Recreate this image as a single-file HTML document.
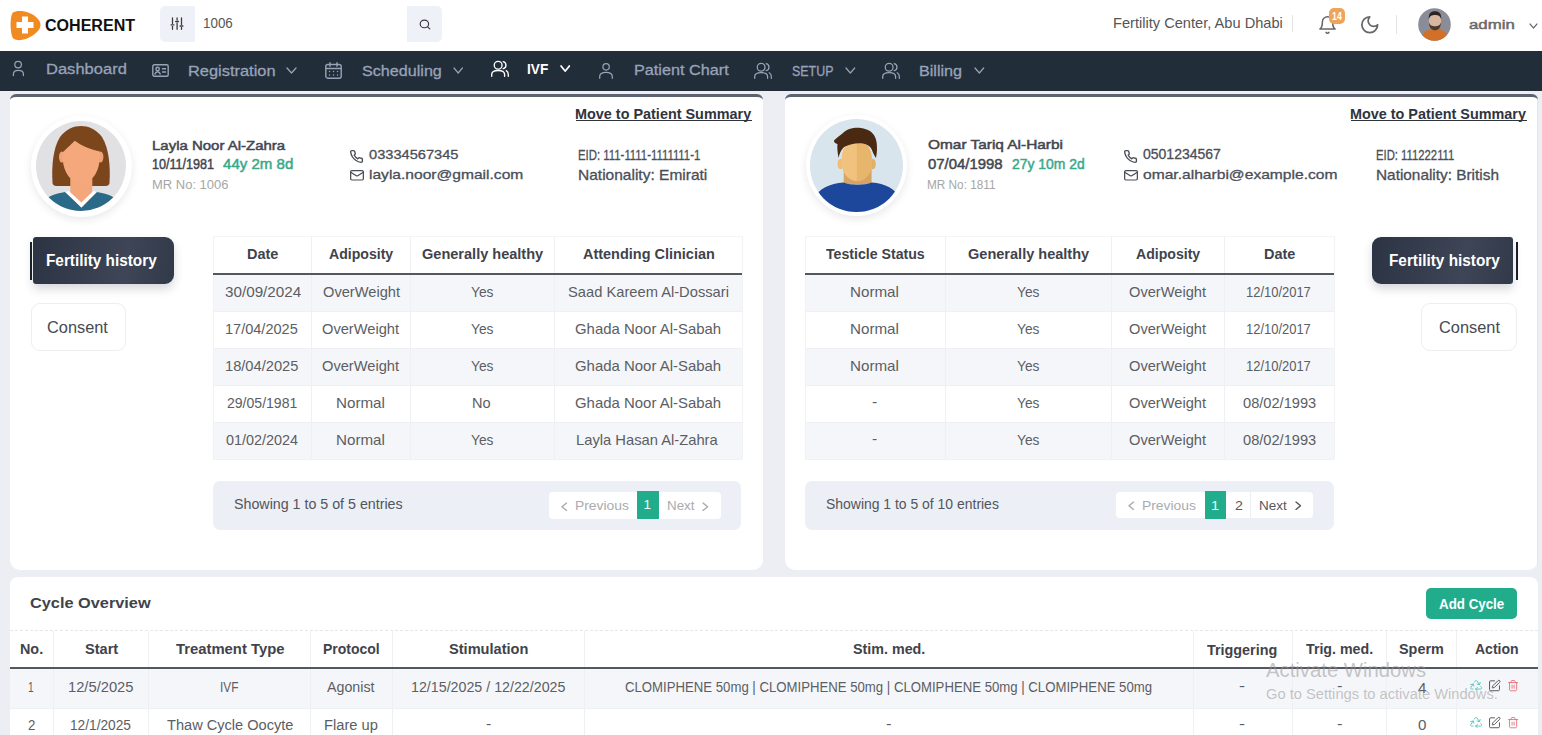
<!DOCTYPE html>
<html><head><meta charset="utf-8">
<style>
*{margin:0;padding:0;box-sizing:border-box}
html,body{width:1542px;height:735px;overflow:hidden;background:#eceef4;font-family:"Liberation Sans",sans-serif}
.a{position:absolute}
.t{position:absolute;white-space:nowrap;transform-origin:0 0}
svg{position:absolute;overflow:visible}
</style></head><body>
<div class="a" style="left:0.00px;top:0.00px;width:1542.00px;height:51.00px;background:#fff"></div>
<svg style="left:9px;top:10px;width:33px;height:31px" viewBox="0 0 33 31"><path d="M4 2.5 C8 -0.5 22 0.5 29 9 C33 13.5 32 18 28 22 C21 29 10 32 5 29 C1 26.5 0.5 6 4 2.5Z" fill="#f18b1f"/><path d="M13 6.5h6v5.5h5.5v6H19v5.5h-6V18H7.5v-6H13Z" fill="#fff"/></svg>
<div class="a" style="left:160.00px;top:6.00px;width:35.00px;height:36.00px;background:#eef1f7;border-radius:5px 0 0 5px"></div>
<div class="a" style="left:407.00px;top:6.00px;width:35.00px;height:36.00px;background:#eef1f7;border-radius:0 5px 5px 0"></div>
<svg style="left:170.00px;top:17.00px;width:14.00px;height:13.50px" viewBox="0 0 14 13.5" preserveAspectRatio="none" fill="none" stroke="#3c3c3c" stroke-width="1.3" stroke-linecap="round" stroke-linejoin="round" ><path d="M2.5 1v5.4M2.5 9.3v3M7.1 1v2M7.1 6v6.3M11.5 1v6.4M11.5 10.4v1.9"/><path d="M1.1 7.9h2.8M5.7 4.5h2.8M10.1 9h2.8"/></svg>
<svg style="left:418.50px;top:19.00px;width:12.00px;height:11.00px" viewBox="2 2 20 20" preserveAspectRatio="none" fill="none" stroke="#3c3c3c" stroke-width="2.0" stroke-linecap="round" stroke-linejoin="round" ><circle cx="11" cy="11" r="7"/><path d="m20 20-4-4"/></svg>
<div class="a" style="left:1292.00px;top:15.00px;width:1.00px;height:17.00px;background:#e3e3e3"></div>
<svg style="left:1319.00px;top:15.50px;width:17.00px;height:18.00px" viewBox="2 1 20 22" preserveAspectRatio="none" fill="none" stroke="#666" stroke-width="1.8" stroke-linecap="round" stroke-linejoin="round" ><path d="M6 8a6 6 0 0 1 12 0c0 7 3 9 3 9H3s3-2 3-9"/><path d="M10.3 21a1.94 1.94 0 0 0 3.4 0"/></svg>
<div class="a" style="left:1328.70px;top:7.80px;width:16.00px;height:15.90px;background:#efa45a;border-radius:5px"></div>
<svg style="left:1361.00px;top:16.00px;width:17.50px;height:17.50px" viewBox="2 2 20 20" preserveAspectRatio="none" fill="none" stroke="#666" stroke-width="2" stroke-linecap="round" stroke-linejoin="round" ><path d="M12 3a6 6 0 0 0 9 9 9 9 0 1 1-9-9Z"/></svg>
<div class="a" style="left:1396.00px;top:15.00px;width:1.00px;height:18.50px;background:#e3e3e3"></div>
<svg style="left:1418px;top:7.5px;width:33px;height:33px" viewBox="0 0 33 33"><defs><clipPath id="av"><circle cx="16.5" cy="16.5" r="16.3"/></clipPath></defs><g clip-path="url(#av)"><rect width="33" height="33" fill="#8a8d98"/><rect x="13.5" y="17" width="7" height="5" fill="#c99c80"/><path d="M2 34 C3 26 8 21 17 20.3 C26 21 30 26 31 34Z" fill="#d2702a"/><ellipse cx="17" cy="13.2" rx="6.2" ry="8" fill="#d8b7a0"/><path d="M10.8 11.5 C10.4 5 13 3.2 17 3.2 C21 3.2 23.6 5 23.2 11.5 C22.5 7.6 20 6.9 17 6.9 C14 6.9 11.5 7.6 10.8 11.5Z" fill="#2e2521"/><path d="M10.9 14 C11 20 14 22.3 17 22.3 C20 22.3 23 20 23.1 14 C22 17.5 20 18.3 17 18.3 C14 18.3 12 17.5 10.9 14Z" fill="#4b3a2f"/></g></svg>
<svg style="left:1529.50px;top:23.80px;width:7.00px;height:4.00px" viewBox="6 9 12 6" preserveAspectRatio="none" fill="none" stroke="#666" stroke-width="1.8" stroke-linecap="round" stroke-linejoin="round" ><path d="m6 9 6 6 6-6"/></svg>
<div class="a" style="left:0.00px;top:51.00px;width:1542.00px;height:40.00px;background:#222d3a"></div>
<svg style="left:12.00px;top:60.00px;width:13.00px;height:17.00px" viewBox="0 0 13 17" preserveAspectRatio="none" fill="none" stroke="#98a3b8" stroke-width="1.25" stroke-linecap="round" stroke-linejoin="round" ><circle cx="6.1" cy="4.6" r="3.3"/><path d="M1.4,15.6 L1.4,14 C1.4,11.4 3.5,10.4 6.4,10.4 C9.3,10.4 11.4,11.4 11.4,14 L11.4,15.6"/></svg>
<svg style="left:152.00px;top:64.00px;width:17.00px;height:13.00px" viewBox="0 0 17 13" preserveAspectRatio="none" fill="none" stroke="#98a3b8" stroke-width="1.4" stroke-linecap="round" stroke-linejoin="round" ><rect x="0.8" y="0.8" width="15.4" height="11.4" rx="1.5"/><circle cx="5.6" cy="5" r="1.7"/><path d="M3 10c0.5-1.6 1.5-2.2 2.6-2.2S7.7 8.4 8.2 10"/><path d="M10.5 4.8h3M10.5 8h3"/></svg>
<svg style="left:287.00px;top:68.00px;width:9.00px;height:5.00px" viewBox="6 9 12 6" preserveAspectRatio="none" fill="none" stroke="#98a3b8" stroke-width="1.8" stroke-linecap="round" stroke-linejoin="round" ><path d="m6 9 6 6 6-6"/></svg>
<svg style="left:325.00px;top:62.00px;width:17.00px;height:17.00px" viewBox="0 0 17 17" preserveAspectRatio="none" fill="none" stroke="#98a3b8" stroke-width="1.4" stroke-linecap="round" stroke-linejoin="round" ><rect x="0.8" y="2.5" width="15.4" height="13.7" rx="2"/><path d="M5 0.8v3.4M12 0.8v3.4M0.8 6.5h15.4"/><path d="M4.5 9.5h0.1M8.5 9.5h0.1M12.5 9.5h0.1M4.5 13h0.1M8.5 13h0.1M12.5 13h0.1"/></svg>
<svg style="left:453.60px;top:68.00px;width:8.40px;height:5.00px" viewBox="6 9 12 6" preserveAspectRatio="none" fill="none" stroke="#98a3b8" stroke-width="1.8" stroke-linecap="round" stroke-linejoin="round" ><path d="m6 9 6 6 6-6"/></svg>
<svg style="left:491.00px;top:61.30px;width:18.00px;height:16.00px" viewBox="0 0 18 16" preserveAspectRatio="none" fill="none" stroke="#fff" stroke-width="1.35" stroke-linecap="round" stroke-linejoin="round" ><circle cx="7.15" cy="4.2" r="3.9"/><path d="M0.7,15.3 V13.5 C0.7,10.8 3.5,9.5 7.15,9.5 C10.8,9.5 13.6,10.8 13.6,13.5 V15.3"/><path d="M12.2,0.7 A3.6,3.6 0 0 1 12.2,7.7"/><path d="M15.2,9.7 C16.7,10.4 17.3,11.8 17.3,13.5 V15.3"/></svg>
<svg style="left:560.60px;top:66.30px;width:8.40px;height:5.10px" viewBox="6 9 12 6" preserveAspectRatio="none" fill="none" stroke="#fff" stroke-width="2.1" stroke-linecap="round" stroke-linejoin="round" ><path d="m6 9 6 6 6-6"/></svg>
<svg style="left:598.90px;top:63.00px;width:14.00px;height:16.00px" viewBox="0 0 14 16" preserveAspectRatio="none" fill="none" stroke="#98a3b8" stroke-width="1.25" stroke-linecap="round" stroke-linejoin="round" ><circle cx="7.1" cy="3.8" r="3.2"/><path d="M0.7,15.3 L0.7,13.6 C0.7,10.6 3.5,9.3 7,9.3 C10.5,9.3 13.3,10.6 13.3,13.6 L13.3,15.3"/></svg>
<svg style="left:754.00px;top:63.00px;width:18.00px;height:16.00px" viewBox="0 0 18 16" preserveAspectRatio="none" fill="none" stroke="#98a3b8" stroke-width="1.25" stroke-linecap="round" stroke-linejoin="round" ><circle cx="7.15" cy="4.2" r="3.9"/><path d="M0.7,15.3 V13.5 C0.7,10.8 3.5,9.5 7.15,9.5 C10.8,9.5 13.6,10.8 13.6,13.5 V15.3"/><path d="M12.2,0.7 A3.6,3.6 0 0 1 12.2,7.7"/><path d="M15.2,9.7 C16.7,10.4 17.3,11.8 17.3,13.5 V15.3"/></svg>
<svg style="left:846.00px;top:68.40px;width:8.70px;height:5.00px" viewBox="6 9 12 6" preserveAspectRatio="none" fill="none" stroke="#98a3b8" stroke-width="1.8" stroke-linecap="round" stroke-linejoin="round" ><path d="m6 9 6 6 6-6"/></svg>
<svg style="left:881.70px;top:63.00px;width:18.00px;height:16.00px" viewBox="0 0 18 16" preserveAspectRatio="none" fill="none" stroke="#98a3b8" stroke-width="1.25" stroke-linecap="round" stroke-linejoin="round" ><circle cx="7.15" cy="4.2" r="3.9"/><path d="M0.7,15.3 V13.5 C0.7,10.8 3.5,9.5 7.15,9.5 C10.8,9.5 13.6,10.8 13.6,13.5 V15.3"/><path d="M12.2,0.7 A3.6,3.6 0 0 1 12.2,7.7"/><path d="M15.2,9.7 C16.7,10.4 17.3,11.8 17.3,13.5 V15.3"/></svg>
<svg style="left:975.00px;top:68.40px;width:8.70px;height:5.00px" viewBox="6 9 12 6" preserveAspectRatio="none" fill="none" stroke="#98a3b8" stroke-width="1.8" stroke-linecap="round" stroke-linejoin="round" ><path d="m6 9 6 6 6-6"/></svg>
<div class="a" style="left:10.00px;top:94.00px;width:752.60px;height:476.00px;background:#fff;border-radius:6px 6px 10px 10px;border-top:3px solid #5d6271;"></div>
<div class="a" style="left:785.00px;top:94.00px;width:752.80px;height:476.00px;background:#fff;border-radius:6px 6px 10px 10px;border-top:3px solid #5d6271;"></div>
<div class="a" style="left:1536.50px;top:100.00px;width:1.50px;height:465.00px;background:#e4e6ec"></div>
<div class="a" style="left:30.80px;top:115.50px;width:101px;height:101px;border-radius:50%;background:#fff;box-shadow:0 3px 9px rgba(0,0,0,0.09)"></div>
<svg style="left:36.30px;top:121.00px;width:90px;height:90px" viewBox="0 0 90 90"><defs><clipPath id="cf"><circle cx="45" cy="45" r="45"/></clipPath></defs><g clip-path="url(#cf)"><rect width="90" height="90" fill="#e1e1e3"/><path d="M16.5,62 C15.5,45 17,27 24,16 C30,8 38,5 45,5 C52,5 60,8 66,16 C73,27 74.5,45 73.5,62 C73.3,64.5 71,65 68,65 L22,65 C19,65 16.7,64.5 16.5,62Z" fill="#7b461c"/><rect x="34.3" y="50" width="22" height="32" fill="#f3a77b"/><ellipse cx="25.8" cy="36" rx="2.8" ry="5.5" fill="#f0a276"/><ellipse cx="64.6" cy="36" rx="2.8" ry="5.5" fill="#f0a276"/><path d="M26.5,31.5 L38.8,19.7 C46,25 55,28.5 63.8,30.5 C64.5,46 60,60.5 45.4,62.5 C31,60.5 26,46 26.5,31.5Z" fill="#f4a87c"/><path d="M6,95 L6,82 C10,76 19,72.5 29.2,71 L45.4,86.6 L60.8,71 C71,72.5 80,76 84,82 L84,95Z" fill="#2a6a88"/><path d="M29.2,71 L45.4,86.6 L60.8,71 L57.2,70 L45.4,81.5 L32.8,70Z" fill="#fff"/></g></svg>
<div class="a" style="left:805.50px;top:115.00px;width:101px;height:101px;border-radius:50%;background:#fff;box-shadow:0 3px 9px rgba(0,0,0,0.09)"></div>
<svg style="left:809.50px;top:119.00px;width:93px;height:93px" viewBox="0 0 93 93"><defs><clipPath id="cm"><circle cx="46.5" cy="46.5" r="46.5"/></clipPath></defs><g clip-path="url(#cm)"><rect width="93" height="93" fill="#d8e5ed"/><path d="M33.7,50 L61.6,50 L61.6,64 C55,66 40,66 33.7,64Z" fill="#d8a465"/><path d="M2,100 L4,80 C8,70 20,64.5 33.7,63.6 C40,66.5 55,66.5 61.6,63.6 C75,64.5 86,70 90,80 L92,100Z" fill="#1d479a"/><ellipse cx="30.5" cy="45" rx="3" ry="5.2" fill="#efbd77"/><ellipse cx="62.8" cy="45" rx="3" ry="5.2" fill="#e3b06a"/><path d="M46.9,22 C36,22 31.5,30 31.5,42 C31.5,54 38,62 46.9,62 C56,62 62,54 62,42 C62,30 57,22 46.9,22Z" fill="#f1c27e"/><path d="M46.9,22 C57,22 62,30 62,42 C62,54 56,62 46.9,62Z" fill="#e8b56c"/><path d="M28.5,39 C27.5,33 27,28 27.5,25 C25.5,24.5 23.5,23 24,21.5 C27,18 31,16 33,14 C37,9.5 45,8 51,9 C58,10 63,13 65,18 C67.5,23 67.5,32 66,39 C64.5,37 63,34 61.5,30 C60,27 57,25.5 53,24.5 C47,23.5 40,25 35,27.5 C32,29.5 30,33 28.5,39Z" fill="#4a2913"/></g></svg>
<div class="a" style="left:576.40px;top:119.60px;width:175.80px;height:1.20px;background:#30343c"></div>
<svg style="left:350.30px;top:149.60px;width:13.00px;height:13.00px" viewBox="1 1 22 22" preserveAspectRatio="none" fill="none" stroke="#4a4e58" stroke-width="2.3" stroke-linecap="round" stroke-linejoin="round" ><path d="M22 16.92v3a2 2 0 0 1-2.18 2 19.79 19.79 0 0 1-8.63-3.07 19.5 19.5 0 0 1-6-6 19.79 19.79 0 0 1-3.07-8.67A2 2 0 0 1 4.11 2h3a2 2 0 0 1 2 1.72 12.84 12.84 0 0 0 .7 2.81 2 2 0 0 1-.45 2.11L8.09 9.91a16 16 0 0 0 6 6l1.27-1.27a2 2 0 0 1 2.11-.45 12.84 12.84 0 0 0 2.81.7A2 2 0 0 1 22 16.92z"/></svg>
<svg style="left:350.00px;top:170.00px;width:14.00px;height:10.60px" viewBox="1 3 22 18" preserveAspectRatio="none" fill="none" stroke="#4a4e58" stroke-width="2" stroke-linecap="round" stroke-linejoin="round" ><rect width="20" height="16" x="2" y="4" rx="2"/><path d="m22 7-8.97 5.7a1.94 1.94 0 0 1-2.06 0L2 7"/></svg>
<div class="a" style="left:1351.40px;top:119.60px;width:175.60px;height:1.20px;background:#30343c"></div>
<svg style="left:1124.40px;top:149.60px;width:13.00px;height:13.00px" viewBox="1 1 22 22" preserveAspectRatio="none" fill="none" stroke="#4a4e58" stroke-width="2.3" stroke-linecap="round" stroke-linejoin="round" ><path d="M22 16.92v3a2 2 0 0 1-2.18 2 19.79 19.79 0 0 1-8.63-3.07 19.5 19.5 0 0 1-6-6 19.79 19.79 0 0 1-3.07-8.67A2 2 0 0 1 4.11 2h3a2 2 0 0 1 2 1.72 12.84 12.84 0 0 0 .7 2.81 2 2 0 0 1-.45 2.11L8.09 9.91a16 16 0 0 0 6 6l1.27-1.27a2 2 0 0 1 2.11-.45 12.84 12.84 0 0 0 2.81.7A2 2 0 0 1 22 16.92z"/></svg>
<svg style="left:1124.40px;top:170.00px;width:14.00px;height:10.60px" viewBox="1 3 22 18" preserveAspectRatio="none" fill="none" stroke="#4a4e58" stroke-width="2" stroke-linecap="round" stroke-linejoin="round" ><rect width="20" height="16" x="2" y="4" rx="2"/><path d="m22 7-8.97 5.7a1.94 1.94 0 0 1-2.06 0L2 7"/></svg>
<div class="a" style="left:33.30px;top:236.7px;width:141.00px;height:47.3px;border-radius:3px 9px 9px 3px;background:linear-gradient(100deg,#2c3444,#3d4556 65%,#323a4a);box-shadow:0 5px 10px rgba(30,40,60,0.18)"></div>
<div class="a" style="left:29.70px;top:241.50px;width:2.00px;height:38.00px;background:#1b1f27"></div>
<div class="a" style="left:31.00px;top:303.40px;width:94.80px;height:47.80px;background:#fff;border:1px solid #eceef1;border-radius:9px"></div>
<div class="a" style="left:1372.30px;top:236.7px;width:141.20px;height:47.3px;border-radius:9px 3px 3px 9px;background:linear-gradient(100deg,#2c3444,#3d4556 65%,#323a4a);box-shadow:0 5px 10px rgba(30,40,60,0.18)"></div>
<div class="a" style="left:1515.50px;top:241.50px;width:2.00px;height:38.00px;background:#1b1f27"></div>
<div class="a" style="left:1420.90px;top:303.40px;width:96.50px;height:47.80px;background:#fff;border:1px solid #eceef1;border-radius:9px"></div>
<div class="a" style="left:213.00px;top:236.00px;width:529.00px;height:38.00px;background:#fff"></div>
<div class="a" style="left:213.00px;top:274.00px;width:529.00px;height:37.00px;background:#f5f6f9"></div>
<div class="a" style="left:213.00px;top:311.00px;width:529.00px;height:37.00px;background:#fff"></div>
<div class="a" style="left:213.00px;top:311.00px;width:529.00px;height:1.00px;background:#eef0f3"></div>
<div class="a" style="left:213.00px;top:348.00px;width:529.00px;height:37.00px;background:#f5f6f9"></div>
<div class="a" style="left:213.00px;top:348.00px;width:529.00px;height:1.00px;background:#eef0f3"></div>
<div class="a" style="left:213.00px;top:385.00px;width:529.00px;height:37.00px;background:#fff"></div>
<div class="a" style="left:213.00px;top:385.00px;width:529.00px;height:1.00px;background:#eef0f3"></div>
<div class="a" style="left:213.00px;top:422.00px;width:529.00px;height:37.00px;background:#f5f6f9"></div>
<div class="a" style="left:213.00px;top:422.00px;width:529.00px;height:1.00px;background:#eef0f3"></div>
<div class="a" style="left:213.00px;top:458.50px;width:529.00px;height:1.00px;background:#f0f1f4"></div>
<div class="a" style="left:213.00px;top:236.00px;width:529.00px;height:1.00px;background:#f4f5f7"></div>
<div class="a" style="left:311.20px;top:236.00px;width:1.00px;height:223.00px;background:#eff0f3"></div>
<div class="a" style="left:409.80px;top:236.00px;width:1.00px;height:223.00px;background:#eff0f3"></div>
<div class="a" style="left:553.50px;top:236.00px;width:1.00px;height:223.00px;background:#eff0f3"></div>
<div class="a" style="left:212.50px;top:236.00px;width:1.00px;height:223.00px;background:#f1f2f5"></div>
<div class="a" style="left:741.50px;top:236.00px;width:1.00px;height:223.00px;background:#f1f2f5"></div>
<div class="a" style="left:213.00px;top:272.80px;width:529.00px;height:2.10px;background:#54575e"></div>
<div class="a" style="left:805.00px;top:236.00px;width:529.00px;height:38.00px;background:#fff"></div>
<div class="a" style="left:805.00px;top:274.00px;width:529.00px;height:37.00px;background:#f5f6f9"></div>
<div class="a" style="left:805.00px;top:311.00px;width:529.00px;height:37.00px;background:#fff"></div>
<div class="a" style="left:805.00px;top:311.00px;width:529.00px;height:1.00px;background:#eef0f3"></div>
<div class="a" style="left:805.00px;top:348.00px;width:529.00px;height:37.00px;background:#f5f6f9"></div>
<div class="a" style="left:805.00px;top:348.00px;width:529.00px;height:1.00px;background:#eef0f3"></div>
<div class="a" style="left:805.00px;top:385.00px;width:529.00px;height:37.00px;background:#fff"></div>
<div class="a" style="left:805.00px;top:385.00px;width:529.00px;height:1.00px;background:#eef0f3"></div>
<div class="a" style="left:805.00px;top:422.00px;width:529.00px;height:37.00px;background:#f5f6f9"></div>
<div class="a" style="left:805.00px;top:422.00px;width:529.00px;height:1.00px;background:#eef0f3"></div>
<div class="a" style="left:805.00px;top:458.50px;width:529.00px;height:1.00px;background:#f0f1f4"></div>
<div class="a" style="left:805.00px;top:236.00px;width:529.00px;height:1.00px;background:#f4f5f7"></div>
<div class="a" style="left:944.90px;top:236.00px;width:1.00px;height:223.00px;background:#eff0f3"></div>
<div class="a" style="left:1110.50px;top:236.00px;width:1.00px;height:223.00px;background:#eff0f3"></div>
<div class="a" style="left:1224.20px;top:236.00px;width:1.00px;height:223.00px;background:#eff0f3"></div>
<div class="a" style="left:804.50px;top:236.00px;width:1.00px;height:223.00px;background:#f1f2f5"></div>
<div class="a" style="left:1333.50px;top:236.00px;width:1.00px;height:223.00px;background:#f1f2f5"></div>
<div class="a" style="left:805.00px;top:272.80px;width:529.00px;height:2.10px;background:#54575e"></div>
<div class="a" style="left:213.00px;top:481.00px;width:528.00px;height:48.50px;background:#eceff5;border-radius:7px"></div>
<div class="a" style="left:805.00px;top:481.00px;width:528.50px;height:48.50px;background:#eceff5;border-radius:7px"></div>
<div class="a" style="left:549.30px;top:492.00px;width:171.60px;height:26.80px;background:#fff;border-radius:4px"></div>
<svg style="left:561.50px;top:502.50px;width:4.50px;height:7.50px" viewBox="9 6 6 12" preserveAspectRatio="none" fill="none" stroke="#aaa" stroke-width="1.8" stroke-linecap="round" stroke-linejoin="round" ><path d="m15 18-6-6 6-6"/></svg>
<div class="a" style="left:637.00px;top:490.90px;width:21.80px;height:28.30px;background:#21ad8b"></div>
<svg style="left:703.40px;top:502.50px;width:4.60px;height:7.50px" viewBox="9 6 6 12" preserveAspectRatio="none" fill="none" stroke="#aaa" stroke-width="1.8" stroke-linecap="round" stroke-linejoin="round" ><path d="m9 18 6-6-6-6"/></svg>
<div class="a" style="left:1116.30px;top:491.70px;width:196.70px;height:26.40px;background:#fff;border-radius:4px"></div>
<svg style="left:1129.00px;top:502.30px;width:4.50px;height:7.50px" viewBox="9 6 6 12" preserveAspectRatio="none" fill="none" stroke="#aaa" stroke-width="1.8" stroke-linecap="round" stroke-linejoin="round" ><path d="m15 18-6-6 6-6"/></svg>
<div class="a" style="left:1204.60px;top:490.90px;width:21.80px;height:28.30px;background:#21ad8b"></div>
<div class="a" style="left:1250.30px;top:492.00px;width:0.80px;height:26.00px;background:#eceef2"></div>
<svg style="left:1296.00px;top:502.30px;width:4.50px;height:7.50px" viewBox="9 6 6 12" preserveAspectRatio="none" fill="none" stroke="#555" stroke-width="1.8" stroke-linecap="round" stroke-linejoin="round" ><path d="m9 18 6-6-6-6"/></svg>
<div class="a" style="left:10.00px;top:577.00px;width:1527.70px;height:183.00px;background:#fff;border-radius:8px"></div>
<div class="a" style="left:1426.40px;top:588.30px;width:91.00px;height:30.90px;background:#21ad8b;border-radius:5px"></div>
<div class="a" style="left:10px;top:630px;width:1527.7px;height:0;border-top:1px dashed #e6e7ea"></div>
<div class="a" style="left:10.00px;top:668.00px;width:1527.70px;height:40.00px;background:#f5f6f9"></div>
<div class="a" style="left:10.00px;top:708.00px;width:1527.70px;height:1.00px;background:#eef0f3"></div>
<div class="a" style="left:52.70px;top:631.00px;width:1.00px;height:109.00px;background:#eff0f3"></div>
<div class="a" style="left:147.90px;top:631.00px;width:1.00px;height:109.00px;background:#eff0f3"></div>
<div class="a" style="left:310.00px;top:631.00px;width:1.00px;height:109.00px;background:#eff0f3"></div>
<div class="a" style="left:391.80px;top:631.00px;width:1.00px;height:109.00px;background:#eff0f3"></div>
<div class="a" style="left:583.80px;top:631.00px;width:1.00px;height:109.00px;background:#eff0f3"></div>
<div class="a" style="left:1192.90px;top:631.00px;width:1.00px;height:109.00px;background:#eff0f3"></div>
<div class="a" style="left:1292.00px;top:631.00px;width:1.00px;height:109.00px;background:#eff0f3"></div>
<div class="a" style="left:1386.00px;top:631.00px;width:1.00px;height:109.00px;background:#eff0f3"></div>
<div class="a" style="left:1455.90px;top:631.00px;width:1.00px;height:109.00px;background:#eff0f3"></div>
<div class="a" style="left:10.00px;top:667.00px;width:1527.70px;height:2.00px;background:#54575e"></div>
<svg style="left:1470.00px;top:680.20px;width:12.30px;height:11.20px" viewBox="2 2 20 21" preserveAspectRatio="none" fill="none" stroke="#49c2bc" stroke-width="1.5" stroke-linecap="round" stroke-linejoin="round" ><path d="M7 19H4.815a1.83 1.83 0 0 1-1.57-.881 1.785 1.785 0 0 1-.004-1.784L7.196 9.5"/><path d="M11 19h8.203a1.83 1.83 0 0 0 1.556-.89 1.784 1.784 0 0 0 0-1.775l-1.226-2.12"/><path d="m14 16-3 3 3 3"/><path d="M8.293 13.596 7.196 9.5 3.1 10.598"/><path d="m9.344 5.811 1.093-1.892A1.83 1.83 0 0 1 11.985 3a1.784 1.784 0 0 1 1.546.888l3.943 6.843"/><path d="m13.378 9.633 4.096 1.098 1.097-4.096"/></svg>
<svg style="left:1489.00px;top:680.20px;width:11.00px;height:11.00px" viewBox="2 1.5 20 20" preserveAspectRatio="none" fill="none" stroke="#3a3a3a" stroke-width="1.5" stroke-linecap="round" stroke-linejoin="round" ><path d="M12 3H5a2 2 0 0 0-2 2v14a2 2 0 0 0 2 2h14a2 2 0 0 0 2-2v-7"/><path d="M18.375 2.625a1 1 0 0 1 3 3l-9.013 9.014a2 2 0 0 1-.853.505l-2.873.84a.5.5 0 0 1-.62-.62l.84-2.873a2 2 0 0 1 .506-.852z"/></svg>
<svg style="left:1507.80px;top:680.20px;width:10.20px;height:11.30px" viewBox="2 1 20 22" preserveAspectRatio="none" fill="none" stroke="#e46b78" stroke-width="1.7" stroke-linecap="round" stroke-linejoin="round" ><path d="M3 6h18"/><path d="M19 6v14c0 1-1 2-2 2H7c-1 0-2-1-2-2V6"/><path d="M8 6V4c0-1 1-2 2-2h4c1 0 2 1 2 2v2"/><path d="M10 11v6M14 11v6"/></svg>
<svg style="left:1470.00px;top:717.00px;width:12.30px;height:11.20px" viewBox="2 2 20 21" preserveAspectRatio="none" fill="none" stroke="#49c2bc" stroke-width="1.5" stroke-linecap="round" stroke-linejoin="round" ><path d="M7 19H4.815a1.83 1.83 0 0 1-1.57-.881 1.785 1.785 0 0 1-.004-1.784L7.196 9.5"/><path d="M11 19h8.203a1.83 1.83 0 0 0 1.556-.89 1.784 1.784 0 0 0 0-1.775l-1.226-2.12"/><path d="m14 16-3 3 3 3"/><path d="M8.293 13.596 7.196 9.5 3.1 10.598"/><path d="m9.344 5.811 1.093-1.892A1.83 1.83 0 0 1 11.985 3a1.784 1.784 0 0 1 1.546.888l3.943 6.843"/><path d="m13.378 9.633 4.096 1.098 1.097-4.096"/></svg>
<svg style="left:1489.00px;top:717.00px;width:11.00px;height:11.00px" viewBox="2 1.5 20 20" preserveAspectRatio="none" fill="none" stroke="#3a3a3a" stroke-width="1.5" stroke-linecap="round" stroke-linejoin="round" ><path d="M12 3H5a2 2 0 0 0-2 2v14a2 2 0 0 0 2 2h14a2 2 0 0 0 2-2v-7"/><path d="M18.375 2.625a1 1 0 0 1 3 3l-9.013 9.014a2 2 0 0 1-.853.505l-2.873.84a.5.5 0 0 1-.62-.62l.84-2.873a2 2 0 0 1 .506-.852z"/></svg>
<svg style="left:1507.80px;top:717.00px;width:10.20px;height:11.30px" viewBox="2 1 20 22" preserveAspectRatio="none" fill="none" stroke="#e46b78" stroke-width="1.7" stroke-linecap="round" stroke-linejoin="round" ><path d="M3 6h18"/><path d="M19 6v14c0 1-1 2-2 2H7c-1 0-2-1-2-2V6"/><path d="M8 6V4c0-1 1-2 2-2h4c1 0 2 1 2 2v2"/><path d="M10 11v6M14 11v6"/></svg>
<div class="t" style="left:45.00px;top:16.25px;font-size:17.400px;line-height:19.439px;font-weight:700;color:#111;transform:scaleX(0.9228);">COHERENT</div>
<div class="t" style="left:203.04px;top:15.63px;font-size:14.000px;line-height:15.641px;font-weight:400;color:#555;transform:scaleX(0.9553);">1006</div>
<div class="t" style="left:1112.61px;top:15.20px;font-size:14.800px;line-height:16.534px;font-weight:400;color:#555;transform:scaleX(0.9882);">Fertility Center, Abu Dhabi</div>
<div class="t" style="left:1331.50px;top:10.14px;font-size:11.000px;line-height:12.289px;font-weight:700;color:#fff;transform:scaleX(0.8004);">14</div>
<div class="t" style="left:1469.00px;top:16.60px;font-size:13.700px;line-height:15.305px;font-weight:400;color:#6a6a6a;transform:scaleX(1.2272);-webkit-text-stroke:0.5px #6a6a6a;">admin</div>
<div class="t" style="left:45.63px;top:59.97px;font-size:15.500px;line-height:17.316px;font-weight:400;color:#98a3b8;transform:scaleX(1.0659);-webkit-text-stroke:0.3px #98a3b8;">Dashboard</div>
<div class="t" style="left:187.91px;top:62.53px;font-size:15.100px;line-height:16.870px;font-weight:400;color:#98a3b8;transform:scaleX(1.0866);-webkit-text-stroke:0.3px #98a3b8;">Registration</div>
<div class="t" style="left:361.60px;top:62.53px;font-size:15.100px;line-height:16.870px;font-weight:400;color:#98a3b8;transform:scaleX(1.0687);-webkit-text-stroke:0.3px #98a3b8;">Scheduling</div>
<div class="t" style="left:526.80px;top:61.03px;font-size:15.100px;line-height:16.870px;font-weight:700;color:#fff;transform:scaleX(0.9029);">IVF</div>
<div class="t" style="left:633.74px;top:61.45px;font-size:15.300px;line-height:17.093px;font-weight:400;color:#98a3b8;transform:scaleX(1.0603);-webkit-text-stroke:0.3px #98a3b8;">Patient Chart</div>
<div class="t" style="left:792.00px;top:62.59px;font-size:14.700px;line-height:16.423px;font-weight:400;color:#98a3b8;transform:scaleX(0.8460);-webkit-text-stroke:0.3px #98a3b8;">SETUP</div>
<div class="t" style="left:918.90px;top:62.59px;font-size:14.700px;line-height:16.423px;font-weight:400;color:#98a3b8;transform:scaleX(1.0995);-webkit-text-stroke:0.3px #98a3b8;">Billing</div>
<div class="t" style="left:575.45px;top:106.03px;font-size:15.100px;line-height:16.870px;font-weight:700;color:#30343c;transform:scaleX(0.9548);">Move to Patient Summary</div>
<div class="t" style="left:151.61px;top:137.80px;font-size:13.700px;line-height:15.305px;font-weight:400;color:#434650;transform:scaleX(1.0938);-webkit-text-stroke:0.5px #434650;">Layla Noor Al-Zahra</div>
<div class="t" style="left:151.86px;top:155.82px;font-size:15.000px;line-height:16.758px;font-weight:400;color:#434650;transform:scaleX(0.8386);-webkit-text-stroke:0.5px #434650;">10/11/1981</div>
<div class="t" style="left:223.00px;top:155.82px;font-size:15.000px;line-height:16.758px;font-weight:400;color:#38a98a;transform:scaleX(1.0043);-webkit-text-stroke:0.5px #38a98a;">44y 2m 8d</div>
<div class="t" style="left:151.73px;top:178.47px;font-size:13.400px;line-height:14.970px;font-weight:400;color:#a6a6a6;transform:scaleX(0.9697);">MR No: 1006</div>
<div class="t" style="left:368.50px;top:147.00px;font-size:13.700px;line-height:15.305px;font-weight:400;color:#4a4e58;transform:scaleX(1.0687);-webkit-text-stroke:0.3px #4a4e58;">03334567345</div>
<div class="t" style="left:368.50px;top:167.87px;font-size:13.400px;line-height:14.970px;font-weight:400;color:#4a4e58;transform:scaleX(1.1629);-webkit-text-stroke:0.3px #4a4e58;">layla.noor@gmail.com</div>
<div class="t" style="left:578.23px;top:146.89px;font-size:14.700px;line-height:16.423px;font-weight:400;color:#4a4e58;transform:scaleX(0.7748);-webkit-text-stroke:0.3px #4a4e58;">EID: 111-1111-1111111-1</div>
<div class="t" style="left:577.93px;top:166.87px;font-size:14.500px;line-height:16.199px;font-weight:400;color:#4a4e58;transform:scaleX(1.0698);-webkit-text-stroke:0.3px #4a4e58;">Nationality: Emirati</div>
<div class="t" style="left:1350.44px;top:106.12px;font-size:15.000px;line-height:16.758px;font-weight:700;color:#30343c;transform:scaleX(0.9594);">Move to Patient Summary</div>
<div class="t" style="left:927.70px;top:138.47px;font-size:13.400px;line-height:14.970px;font-weight:400;color:#434650;transform:scaleX(1.1502);-webkit-text-stroke:0.5px #434650;">Omar Tariq Al-Harbi</div>
<div class="t" style="left:927.70px;top:155.82px;font-size:15.000px;line-height:16.758px;font-weight:400;color:#434650;transform:scaleX(0.9942);-webkit-text-stroke:0.5px #434650;">07/04/1998</div>
<div class="t" style="left:1011.70px;top:155.82px;font-size:15.000px;line-height:16.758px;font-weight:400;color:#38a98a;transform:scaleX(0.9264);-webkit-text-stroke:0.5px #38a98a;">27y 10m 2d</div>
<div class="t" style="left:926.82px;top:178.47px;font-size:13.400px;line-height:14.970px;font-weight:400;color:#a6a6a6;transform:scaleX(0.8803);">MR No: 1811</div>
<div class="t" style="left:1143.00px;top:147.45px;font-size:14.200px;line-height:15.864px;font-weight:400;color:#4a4e58;transform:scaleX(0.9872);-webkit-text-stroke:0.3px #4a4e58;">0501234567</div>
<div class="t" style="left:1143.00px;top:167.87px;font-size:13.400px;line-height:14.970px;font-weight:400;color:#4a4e58;transform:scaleX(1.1652);-webkit-text-stroke:0.3px #4a4e58;">omar.alharbi@example.com</div>
<div class="t" style="left:1375.83px;top:146.89px;font-size:14.700px;line-height:16.423px;font-weight:400;color:#4a4e58;transform:scaleX(0.7692);-webkit-text-stroke:0.3px #4a4e58;">EID: 111222111</div>
<div class="t" style="left:1375.54px;top:166.87px;font-size:14.500px;line-height:16.199px;font-weight:400;color:#4a4e58;transform:scaleX(1.0593);-webkit-text-stroke:0.3px #4a4e58;">Nationality: British</div>
<div class="t" style="left:46.46px;top:251.14px;font-size:16.300px;line-height:18.210px;font-weight:700;color:#fff;transform:scaleX(0.9412);">Fertility history</div>
<div class="t" style="left:47.40px;top:318.52px;font-size:16.000px;line-height:17.875px;font-weight:400;color:#474a50;transform:scaleX(1.0208);">Consent</div>
<div class="t" style="left:1388.76px;top:251.14px;font-size:16.300px;line-height:18.210px;font-weight:700;color:#fff;transform:scaleX(0.9420);">Fertility history</div>
<div class="t" style="left:1438.50px;top:318.52px;font-size:16.000px;line-height:17.875px;font-weight:400;color:#474a50;transform:scaleX(1.0225);">Consent</div>
<div class="t" style="left:246.80px;top:247.13px;font-size:14.000px;line-height:15.641px;font-weight:700;color:#3f434b;transform:scaleX(1.0341);">Date</div>
<div class="t" style="left:329.00px;top:247.13px;font-size:14.000px;line-height:15.641px;font-weight:700;color:#3f434b;transform:scaleX(1.0064);">Adiposity</div>
<div class="t" style="left:422.00px;top:247.13px;font-size:14.000px;line-height:15.641px;font-weight:700;color:#3f434b;transform:scaleX(1.0382);">Generally healthy</div>
<div class="t" style="left:583.00px;top:247.13px;font-size:14.000px;line-height:15.641px;font-weight:700;color:#3f434b;transform:scaleX(1.0331);">Attending Clinician</div>
<div class="t" style="left:224.50px;top:284.75px;font-size:14.200px;line-height:15.864px;font-weight:400;color:#5b5e64;transform:scaleX(1.0729);">30/09/2024</div>
<div class="t" style="left:322.60px;top:284.75px;font-size:14.200px;line-height:15.864px;font-weight:400;color:#5b5e64;transform:scaleX(1.0321);">OverWeight</div>
<div class="t" style="left:471.00px;top:284.75px;font-size:14.200px;line-height:15.864px;font-weight:400;color:#5b5e64;transform:scaleX(0.9675);">Yes</div>
<div class="t" style="left:567.70px;top:284.75px;font-size:14.200px;line-height:15.864px;font-weight:400;color:#5b5e64;transform:scaleX(1.0361);">Saad Kareem Al-Dossari</div>
<div class="t" style="left:225.43px;top:321.75px;font-size:14.200px;line-height:15.864px;font-weight:400;color:#5b5e64;transform:scaleX(1.0240);">17/04/2025</div>
<div class="t" style="left:322.45px;top:321.75px;font-size:14.200px;line-height:15.864px;font-weight:400;color:#5b5e64;transform:scaleX(1.0321);">OverWeight</div>
<div class="t" style="left:471.00px;top:321.75px;font-size:14.200px;line-height:15.864px;font-weight:400;color:#5b5e64;transform:scaleX(0.9675);">Yes</div>
<div class="t" style="left:575.00px;top:321.75px;font-size:14.200px;line-height:15.864px;font-weight:400;color:#5b5e64;transform:scaleX(1.0526);">Ghada Noor Al-Sabah</div>
<div class="t" style="left:225.12px;top:358.75px;font-size:14.200px;line-height:15.864px;font-weight:400;color:#5b5e64;transform:scaleX(1.0326);">18/04/2025</div>
<div class="t" style="left:322.45px;top:358.75px;font-size:14.200px;line-height:15.864px;font-weight:400;color:#5b5e64;transform:scaleX(1.0321);">OverWeight</div>
<div class="t" style="left:471.00px;top:358.75px;font-size:14.200px;line-height:15.864px;font-weight:400;color:#5b5e64;transform:scaleX(0.9675);">Yes</div>
<div class="t" style="left:575.00px;top:358.75px;font-size:14.200px;line-height:15.864px;font-weight:400;color:#5b5e64;transform:scaleX(1.0526);">Ghada Noor Al-Sabah</div>
<div class="t" style="left:227.15px;top:395.75px;font-size:14.200px;line-height:15.864px;font-weight:400;color:#5b5e64;transform:scaleX(0.9899);">29/05/1981</div>
<div class="t" style="left:336.08px;top:395.75px;font-size:14.200px;line-height:15.864px;font-weight:400;color:#5b5e64;transform:scaleX(1.0702);">Normal</div>
<div class="t" style="left:472.27px;top:395.75px;font-size:14.200px;line-height:15.864px;font-weight:400;color:#5b5e64;transform:scaleX(1.0263);">No</div>
<div class="t" style="left:575.00px;top:395.75px;font-size:14.200px;line-height:15.864px;font-weight:400;color:#5b5e64;transform:scaleX(1.0526);">Ghada Noor Al-Sabah</div>
<div class="t" style="left:226.25px;top:432.75px;font-size:14.200px;line-height:15.864px;font-weight:400;color:#5b5e64;transform:scaleX(1.0152);">01/02/2024</div>
<div class="t" style="left:336.08px;top:432.75px;font-size:14.200px;line-height:15.864px;font-weight:400;color:#5b5e64;transform:scaleX(1.0702);">Normal</div>
<div class="t" style="left:471.00px;top:432.75px;font-size:14.200px;line-height:15.864px;font-weight:400;color:#5b5e64;transform:scaleX(0.9675);">Yes</div>
<div class="t" style="left:576.16px;top:432.75px;font-size:14.200px;line-height:15.864px;font-weight:400;color:#5b5e64;transform:scaleX(1.0387);">Layla Hasan Al-Zahra</div>
<div class="t" style="left:825.90px;top:247.13px;font-size:14.000px;line-height:15.641px;font-weight:700;color:#3f434b;transform:scaleX(1.0093);">Testicle Status</div>
<div class="t" style="left:967.50px;top:247.13px;font-size:14.000px;line-height:15.641px;font-weight:700;color:#3f434b;transform:scaleX(1.0382);">Generally healthy</div>
<div class="t" style="left:1135.65px;top:247.13px;font-size:14.000px;line-height:15.641px;font-weight:700;color:#3f434b;transform:scaleX(1.0064);">Adiposity</div>
<div class="t" style="left:1263.55px;top:247.13px;font-size:14.000px;line-height:15.641px;font-weight:700;color:#3f434b;transform:scaleX(1.0341);">Date</div>
<div class="t" style="left:850.28px;top:284.75px;font-size:14.200px;line-height:15.864px;font-weight:400;color:#5b5e64;transform:scaleX(1.0702);">Normal</div>
<div class="t" style="left:1017.05px;top:284.75px;font-size:14.200px;line-height:15.864px;font-weight:400;color:#5b5e64;transform:scaleX(0.9675);">Yes</div>
<div class="t" style="left:1129.30px;top:284.75px;font-size:14.200px;line-height:15.864px;font-weight:400;color:#5b5e64;transform:scaleX(1.0321);">OverWeight</div>
<div class="t" style="left:1246.44px;top:284.75px;font-size:14.200px;line-height:15.864px;font-weight:400;color:#5b5e64;transform:scaleX(0.9128);">12/10/2017</div>
<div class="t" style="left:850.28px;top:321.75px;font-size:14.200px;line-height:15.864px;font-weight:400;color:#5b5e64;transform:scaleX(1.0702);">Normal</div>
<div class="t" style="left:1017.05px;top:321.75px;font-size:14.200px;line-height:15.864px;font-weight:400;color:#5b5e64;transform:scaleX(0.9675);">Yes</div>
<div class="t" style="left:1129.30px;top:321.75px;font-size:14.200px;line-height:15.864px;font-weight:400;color:#5b5e64;transform:scaleX(1.0321);">OverWeight</div>
<div class="t" style="left:1246.44px;top:321.75px;font-size:14.200px;line-height:15.864px;font-weight:400;color:#5b5e64;transform:scaleX(0.9128);">12/10/2017</div>
<div class="t" style="left:850.28px;top:358.75px;font-size:14.200px;line-height:15.864px;font-weight:400;color:#5b5e64;transform:scaleX(1.0702);">Normal</div>
<div class="t" style="left:1017.05px;top:358.75px;font-size:14.200px;line-height:15.864px;font-weight:400;color:#5b5e64;transform:scaleX(0.9675);">Yes</div>
<div class="t" style="left:1129.30px;top:358.75px;font-size:14.200px;line-height:15.864px;font-weight:400;color:#5b5e64;transform:scaleX(1.0321);">OverWeight</div>
<div class="t" style="left:1246.44px;top:358.75px;font-size:14.200px;line-height:15.864px;font-weight:400;color:#5b5e64;transform:scaleX(0.9128);">12/10/2017</div>
<div class="t" style="left:872.45px;top:394.85px;font-size:14.200px;line-height:15.864px;font-weight:400;color:#5b5e64;transform:scaleX(1.1000);">-</div>
<div class="t" style="left:1017.05px;top:395.75px;font-size:14.200px;line-height:15.864px;font-weight:400;color:#5b5e64;transform:scaleX(0.9675);">Yes</div>
<div class="t" style="left:1129.30px;top:395.75px;font-size:14.200px;line-height:15.864px;font-weight:400;color:#5b5e64;transform:scaleX(1.0321);">OverWeight</div>
<div class="t" style="left:1242.70px;top:395.75px;font-size:14.200px;line-height:15.864px;font-weight:400;color:#5b5e64;transform:scaleX(1.0307);">08/02/1993</div>
<div class="t" style="left:872.45px;top:431.85px;font-size:14.200px;line-height:15.864px;font-weight:400;color:#5b5e64;transform:scaleX(1.1000);">-</div>
<div class="t" style="left:1017.05px;top:432.75px;font-size:14.200px;line-height:15.864px;font-weight:400;color:#5b5e64;transform:scaleX(0.9675);">Yes</div>
<div class="t" style="left:1129.30px;top:432.75px;font-size:14.200px;line-height:15.864px;font-weight:400;color:#5b5e64;transform:scaleX(1.0321);">OverWeight</div>
<div class="t" style="left:1242.70px;top:432.75px;font-size:14.200px;line-height:15.864px;font-weight:400;color:#5b5e64;transform:scaleX(1.0307);">08/02/1993</div>
<div class="t" style="left:233.60px;top:497.24px;font-size:14.100px;line-height:15.752px;font-weight:400;color:#52555c;transform:scaleX(1.0106);">Showing 1 to 5 of 5 entries</div>
<div class="t" style="left:825.60px;top:497.24px;font-size:14.100px;line-height:15.752px;font-weight:400;color:#52555c;transform:scaleX(0.9893);">Showing 1 to 5 of 10 entries</div>
<div class="t" style="left:574.67px;top:497.88px;font-size:13.500px;line-height:15.082px;font-weight:400;color:#a9abb0;transform:scaleX(1.0256);">Previous</div>
<div class="t" style="left:643.50px;top:497.48px;font-size:13.500px;line-height:15.082px;font-weight:400;color:#e8fff8;transform:scaleX(1.0000);">1</div>
<div class="t" style="left:666.61px;top:497.88px;font-size:13.500px;line-height:15.082px;font-weight:400;color:#a9abb0;transform:scaleX(0.9886);">Next</div>
<div class="t" style="left:1142.27px;top:497.58px;font-size:13.500px;line-height:15.082px;font-weight:400;color:#a9abb0;transform:scaleX(1.0276);">Previous</div>
<div class="t" style="left:1210.92px;top:497.88px;font-size:13.500px;line-height:15.082px;font-weight:400;color:#e8fff8;transform:scaleX(1.0833);">1</div>
<div class="t" style="left:1234.60px;top:497.88px;font-size:13.500px;line-height:15.082px;font-weight:400;color:#55585e;transform:scaleX(1.0571);">2</div>
<div class="t" style="left:1258.50px;top:497.58px;font-size:13.500px;line-height:15.082px;font-weight:400;color:#55585e;transform:scaleX(0.9997);">Next</div>
<div class="t" style="left:30.20px;top:594.27px;font-size:15.500px;line-height:17.316px;font-weight:700;color:#3f434b;transform:scaleX(1.0524);">Cycle Overview</div>
<div class="t" style="left:1439.40px;top:594.76px;font-size:15.400px;line-height:17.205px;font-weight:700;color:#fff;transform:scaleX(0.8665);">Add Cycle</div>
<div class="t" style="left:19.85px;top:641.23px;font-size:15.100px;line-height:16.870px;font-weight:700;color:#3f434b;transform:scaleX(0.9516);">No.</div>
<div class="t" style="left:84.80px;top:641.23px;font-size:15.100px;line-height:16.870px;font-weight:700;color:#3f434b;transform:scaleX(0.9662);">Start</div>
<div class="t" style="left:175.90px;top:641.23px;font-size:15.100px;line-height:16.870px;font-weight:700;color:#3f434b;transform:scaleX(0.9823);">Treatment Type</div>
<div class="t" style="left:322.77px;top:641.23px;font-size:15.100px;line-height:16.870px;font-weight:700;color:#3f434b;transform:scaleX(0.9263);">Protocol</div>
<div class="t" style="left:448.70px;top:641.23px;font-size:15.100px;line-height:16.870px;font-weight:700;color:#3f434b;transform:scaleX(0.9664);">Stimulation</div>
<div class="t" style="left:852.60px;top:641.23px;font-size:15.100px;line-height:16.870px;font-weight:700;color:#3f434b;transform:scaleX(0.9471);">Stim. med.</div>
<div class="t" style="left:1207.40px;top:641.63px;font-size:15.100px;line-height:16.870px;font-weight:700;color:#3f434b;transform:scaleX(0.9514);">Triggering</div>
<div class="t" style="left:1306.00px;top:641.23px;font-size:15.100px;line-height:16.870px;font-weight:700;color:#3f434b;transform:scaleX(0.9410);">Trig. med.</div>
<div class="t" style="left:1399.30px;top:641.23px;font-size:15.100px;line-height:16.870px;font-weight:700;color:#3f434b;transform:scaleX(0.9537);">Sperm</div>
<div class="t" style="left:1475.30px;top:641.23px;font-size:15.100px;line-height:16.870px;font-weight:700;color:#3f434b;transform:scaleX(0.9287);">Action</div>
<div class="t" style="left:28.33px;top:679.23px;font-size:15.100px;line-height:16.870px;font-weight:400;color:#5b5e64;transform:scaleX(0.6714);">1</div>
<div class="t" style="left:67.73px;top:679.23px;font-size:15.100px;line-height:16.870px;font-weight:400;color:#5b5e64;transform:scaleX(0.9749);">12/5/2025</div>
<div class="t" style="left:219.71px;top:679.23px;font-size:15.100px;line-height:16.870px;font-weight:400;color:#5b5e64;transform:scaleX(0.7861);">IVF</div>
<div class="t" style="left:327.40px;top:679.23px;font-size:15.100px;line-height:16.870px;font-weight:400;color:#5b5e64;transform:scaleX(0.9423);">Agonist</div>
<div class="t" style="left:410.66px;top:679.23px;font-size:15.100px;line-height:16.870px;font-weight:400;color:#5b5e64;transform:scaleX(0.9435);">12/15/2025 / 12/22/2025</div>
<div class="t" style="left:625.00px;top:679.23px;font-size:15.100px;line-height:16.870px;font-weight:400;color:#5b5e64;transform:scaleX(0.8727);">CLOMIPHENE 50mg | CLOMIPHENE 50mg | CLOMIPHENE 50mg | CLOMIPHENE 50mg</div>
<div class="t" style="left:1239.00px;top:678.13px;font-size:15.100px;line-height:16.870px;font-weight:400;color:#5b5e64;transform:scaleX(1.2000);">-</div>
<div class="t" style="left:1336.60px;top:678.13px;font-size:15.100px;line-height:16.870px;font-weight:400;color:#5b5e64;transform:scaleX(1.0800);">-</div>
<div class="t" style="left:1418.00px;top:679.63px;font-size:15.100px;line-height:16.870px;font-weight:400;color:#5b5e64;transform:scaleX(1.0000);">4</div>
<div class="t" style="left:28.00px;top:717.23px;font-size:15.100px;line-height:16.870px;font-weight:400;color:#5b5e64;transform:scaleX(0.8750);">2</div>
<div class="t" style="left:70.39px;top:717.23px;font-size:15.100px;line-height:16.870px;font-weight:400;color:#5b5e64;transform:scaleX(0.9079);">12/1/2025</div>
<div class="t" style="left:166.50px;top:717.23px;font-size:15.100px;line-height:16.870px;font-weight:400;color:#5b5e64;transform:scaleX(0.9666);">Thaw Cycle Oocyte</div>
<div class="t" style="left:323.83px;top:717.23px;font-size:15.100px;line-height:16.870px;font-weight:400;color:#5b5e64;transform:scaleX(0.9745);">Flare up</div>
<div class="t" style="left:485.80px;top:716.13px;font-size:15.100px;line-height:16.870px;font-weight:400;color:#5b5e64;transform:scaleX(1.0400);">-</div>
<div class="t" style="left:886.00px;top:716.13px;font-size:15.100px;line-height:16.870px;font-weight:400;color:#5b5e64;transform:scaleX(1.1000);">-</div>
<div class="t" style="left:1239.00px;top:716.13px;font-size:15.100px;line-height:16.870px;font-weight:400;color:#5b5e64;transform:scaleX(1.2000);">-</div>
<div class="t" style="left:1336.60px;top:716.13px;font-size:15.100px;line-height:16.870px;font-weight:400;color:#5b5e64;transform:scaleX(1.0800);">-</div>
<div class="t" style="left:1418.00px;top:717.23px;font-size:15.100px;line-height:16.870px;font-weight:400;color:#5b5e64;transform:scaleX(1.0000);">0</div>
<div class="t" style="left:1266.00px;top:657.89px;font-size:21.000px;line-height:23.461px;font-weight:400;color:rgba(150,150,150,0.55);transform:scaleX(0.9660);">Activate Windows</div>
<div class="t" style="left:1266.00px;top:684.95px;font-size:15.300px;line-height:17.093px;font-weight:400;color:rgba(150,150,150,0.55);transform:scaleX(0.9600);">Go to Settings to activate Windows.</div>

</body></html>
